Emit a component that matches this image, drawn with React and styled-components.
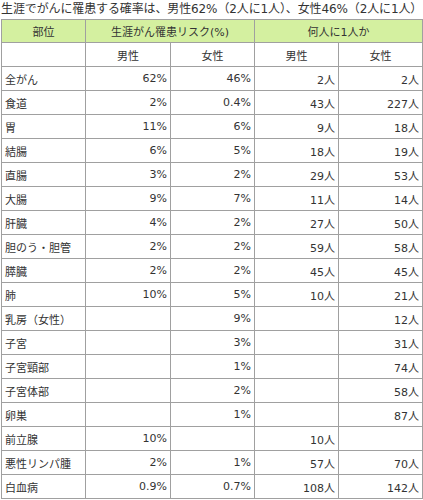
import React from 'react';
import styled, { createGlobalStyle } from 'styled-components';

const GlobalStyle = createGlobalStyle`
    body {
        margin: 0;
        background: #fff;
        font-family: "DejaVu Sans", "Noto Sans CJK JP", sans-serif;
        color: #333;
    }
`;

const rows = [
    ['全がん', '62%', '46%', '2人', '2人'],
    ['食道', '2%', '0.4%', '43人', '227人'],
    ['胃', '11%', '6%', '9人', '18人'],
    ['結腸', '6%', '5%', '18人', '19人'],
    ['直腸', '3%', '2%', '29人', '53人'],
    ['大腸', '9%', '7%', '11人', '14人'],
    ['肝臓', '4%', '2%', '27人', '50人'],
    ['胆のう・胆管', '2%', '2%', '59人', '58人'],
    ['膵臓', '2%', '2%', '45人', '45人'],
    ['肺', '10%', '5%', '10人', '21人'],
    ['乳房（女性）', '', '9%', '', '12人'],
    ['子宮', '', '3%', '', '31人'],
    ['子宮頸部', '', '1%', '', '74人'],
    ['子宮体部', '', '2%', '', '58人'],
    ['卵巣', '', '1%', '', '87人'],
    ['前立腺', '10%', '', '10人', ''],
    ['悪性リンパ腫', '2%', '1%', '57人', '70人'],
    ['白血病', '0.9%', '0.7%', '108人', '142人'],
];

const App = () => {
    return (
        <Container>
            <GlobalStyle />
            <Title>生涯でがんに罹患する確率は、男性62%（2人に1人）、女性46%（2人に1人）</Title>
            <Table>
                <colgroup>
                    <col style={ { width: 84 } } />
                    <col style={ { width: 85 } } />
                    <col style={ { width: 84 } } />
                    <col style={ { width: 84 } } />
                    <col style={ { width: 84 } } />
                </colgroup>
                <thead>
                    <HeadRow>
                        <Th>部位</Th>
                        <Th colSpan={ 2 }>生涯がん罹患リスク(%)</Th>
                        <Th colSpan={ 2 }>何人に1人か</Th>
                    </HeadRow>
                </thead>
                <tbody>
                    <Row>
                        <Cell />
                        <Cell center>男性</Cell>
                        <Cell center>女性</Cell>
                        <Cell center>男性</Cell>
                        <Cell center>女性</Cell>
                    </Row>
                    { rows.map((r) => (
                        <Row key={ r[0] }>
                            <Cell>{ r[0] }</Cell>
                            <Cell num>{ r[1] }</Cell>
                            <Cell num>{ r[2] }</Cell>
                            <Cell num>{ r[3] }</Cell>
                            <Cell num>{ r[4] }</Cell>
                        </Row>
                    )) }
                </tbody>
            </Table>
        </Container>
    );
};

export default App;


const Container = styled.div`
    width: 423px;
`;
const Title = styled.div`
    font-size: 12px;
    line-height: 18px;
    height: 19px;
    padding-left: 1px;
    letter-spacing: -0.12px;
    white-space: nowrap;
    color: #333;
`;
const Table = styled.table`
    border-collapse: collapse;
    table-layout: fixed;
    width: 421px;
    margin-left: 1px;
    font-size: 11px;
    color: #333;
`;
const HeadRow = styled.tr`
    height: 23px;
    background-color: #d4f0a0;
`;
const Th = styled.th`
    border: 1px solid #a0a0a0;
    font-weight: normal;
    text-align: center;
    padding: 0;
`;
const Row = styled.tr`
    height: 24px;
`;
const Cell = styled.td`
    border: 1px solid #a0a0a0;
    padding: 0 3px;
    white-space: nowrap;
    text-align: ${({ num, center }) => (num ? 'right' : center ? 'center' : 'left')};
`;
